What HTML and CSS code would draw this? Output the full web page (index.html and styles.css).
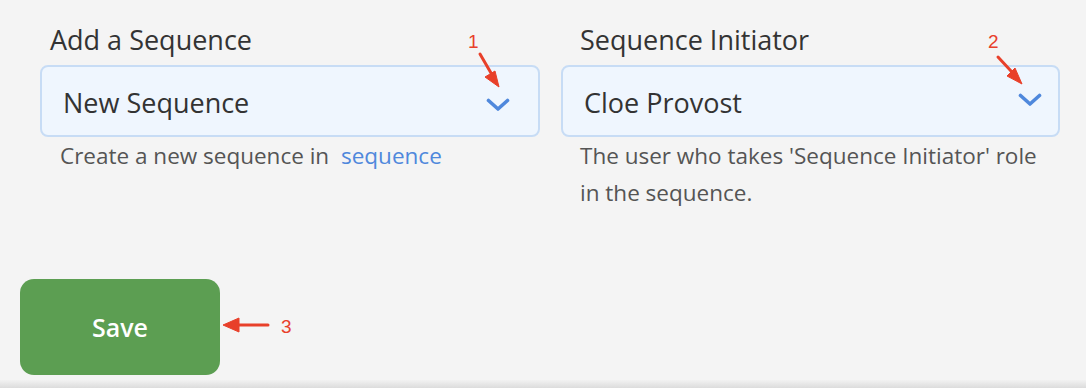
FILE: index.html
```html
<!DOCTYPE html>
<html>
<head>
<meta charset="utf-8">
<link rel="stylesheet" href="styles.css">
</head>
<body>
<div class="page">
  <div class="fields">
    <div class="field">
      <div class="label">Add a Sequence</div>
      <div class="select">
        <span class="value">New Sequence</span>
        <svg class="chev" width="24" height="14" viewBox="0 0 24 14"><path d="M2.5 2.5 L12 11 L21.5 2.5" fill="none" stroke="#4f88dc" stroke-width="3.6" stroke-linecap="round" stroke-linejoin="round"/></svg>
      </div>
      <div class="help">Create a new sequence in <a class="link">sequence</a></div>
    </div>
    <div class="field field-right">
      <div class="label">Sequence Initiator</div>
      <div class="select">
        <span class="value">Cloe Provost</span>
        <svg class="chev" width="24" height="14" viewBox="0 0 24 14"><path d="M2.5 2.5 L12 11 L21.5 2.5" fill="none" stroke="#4f88dc" stroke-width="3.6" stroke-linecap="round" stroke-linejoin="round"/></svg>
      </div>
      <div class="help">The user who takes 'Sequence Initiator' role in the sequence.</div>
    </div>
  </div>
  <button class="save">Save</button>
  <div class="bottom-band"></div>

  <svg class="annot" width="1086" height="388" viewBox="0 0 1086 388">
    <g fill="#e8402a" stroke="#e8402a">
      <line x1="480" y1="54" x2="491" y2="73" stroke-width="3" stroke-linecap="round"/>
      <polygon points="499,87 485,77 495,71" stroke-width="1" stroke-linejoin="round"/>
      <line x1="998" y1="57" x2="1011" y2="71" stroke-width="3" stroke-linecap="round"/>
      <polygon points="1022,84 1007,76 1015,68" stroke-width="1" stroke-linejoin="round"/>
      <line x1="268" y1="325" x2="238" y2="325" stroke-width="3" stroke-linecap="round"/>
      <polygon points="223,325 239,318 239,332" stroke-width="1" stroke-linejoin="round"/>
    </g>
    <g fill="#e8402a" font-family="Liberation Sans, Arial, sans-serif" font-size="19">
      <text x="468" y="48">1</text>
      <text x="988" y="48">2</text>
      <text x="281" y="333">3</text>
    </g>
  </svg>
</div>
</body>
</html>
```

FILE: styles.css
```css
html, body {
  margin: 0;
  padding: 0;
  background: #f4f4f4;
}
.page {
  position: relative;
  width: 1086px;
  height: 388px;
  overflow: hidden;
  font-family: "Open Sans", "Noto Sans", sans-serif;
  color: #333333;
}
.fields {
  display: grid;
  grid-template-columns: 500px 499px;
  column-gap: 21px;
  padding: 24px 0 0 40px;
}
.field {
  display: flex;
  flex-direction: column;
}
.label {
  font-size: 27px;
  line-height: 32px;
  padding-left: 10px;
  margin-bottom: 9px;
  color: #333;
}
.select {
  box-sizing: border-box;
  height: 72px;
  border: 2px solid #c7dcf5;
  border-radius: 8px;
  background: #eff6fe;
  display: flex;
  align-items: center;
  justify-content: space-between;
  padding: 0 28px 0 21px;
}
.value {
  font-size: 27px;
  color: #333;
  padding-top: 2px;
}
.chev {
  display: block;
  margin-top: 8px;
}
.help {
  font-size: 22.5px;
  line-height: 37px;
  color: #555;
  padding-left: 20px;
  padding-right: 8px;
  margin-top: 0;
}
.field-right .select {
  padding-right: 16px;
}
.field-right .chev {
  margin-top: -2px;
}
.field-right .label {
  padding-left: 19px;
}
.field-right .help {
  padding-left: 19px;
  padding-right: 10px;
}
.link {
  color: #4f88dc;
  margin-left: 6px;
}
.save {
  display: block;
  margin: 68px 0 0 20px;
  width: 200px;
  height: 96px;
  border: none;
  border-radius: 14px;
  background: #5c9e52;
  color: #ffffff;
  font-family: "Open Sans", "Noto Sans", sans-serif;
  font-size: 25px;
  font-weight: 600;
  padding: 0;
}
.bottom-band {
  position: absolute;
  left: 0;
  right: 0;
  bottom: 0;
  height: 8px;
  background: linear-gradient(#f2f2f2, #dcdcdc);
}
.annot {
  position: absolute;
  left: 0;
  top: 0;
  pointer-events: none;
}
```
